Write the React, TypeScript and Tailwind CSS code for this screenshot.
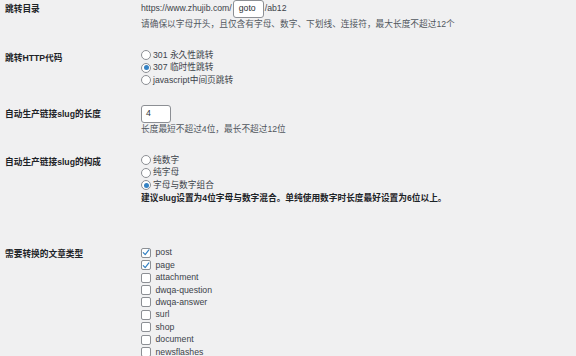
import React from 'react'

const FONT = '"Liberation Sans", "Noto Sans CJK SC", sans-serif'

const Radio = ({ checked, label }: { checked?: boolean; label: string }) => (
  <div className="flex items-center h-[12.5px]">
    <span className="w-[10px] h-[10px] rounded-full border border-[#8c8f94] bg-white flex items-center justify-center shrink-0">
      {checked && <span className="w-[5px] h-[5px] rounded-full bg-[#3582c4]" />}
    </span>
    <span className="ml-[2px] text-[#3c434a]">{label}</span>
  </div>
)

const Check = ({ checked, label }: { checked?: boolean; label: string }) => (
  <div className="flex items-center h-[12.45px]">
    <span className="w-[10px] h-[10px] rounded-[2px] border border-[#8c8f94] bg-white flex items-center justify-center shrink-0">
      {checked && (
        <svg viewBox="0 0 10 10" className="w-[9px] h-[9px]">
          <path d="M1.6 5.2 L4 7.6 L8.6 1.8" fill="none" stroke="#3582c4" strokeWidth="1.5" strokeLinecap="round" strokeLinejoin="round" />
        </svg>
      )}
    </span>
    <span className="ml-[4.5px] text-[#3c434a]">{label}</span>
  </div>
)

const Row = ({ label, labelClass, className, children }: { label: string; labelClass: string; className?: string; children: React.ReactNode }) => (
  <div className={`flex ${className ?? ''}`}>
    <div className={`w-[141px] shrink-0 pl-[5px] font-bold text-[#1d2327] ${labelClass}`}>{label}</div>
    <div className="flex flex-col">{children}</div>
  </div>
)

const postTypes = [
  { name: 'post', checked: true },
  { name: 'page', checked: true },
  { name: 'attachment' },
  { name: 'dwqa-question' },
  { name: 'dwqa-answer' },
  { name: 'surl' },
  { name: 'shop' },
  { name: 'document' },
  { name: 'newsflashes' },
]

export default function App() {
  return (
    <div className="w-[576px] h-[356px] overflow-hidden bg-[#f0f0f1] text-[8.7px] text-[#3c434a]" style={{ fontFamily: FONT }}>
      <Row label="跳转目录" labelClass="leading-[19px]">
        <div className="flex items-center h-[18px]">
          <span>https://www.zhujib.com/</span>
          <span className="w-[31px] h-[18px] ml-[1px] border border-[#8c8f94] rounded-[3px] bg-white px-[5px] flex items-center text-[#2c3338]">goto</span>
          <span className="ml-[1px]">/ab12</span>
        </div>
        <p className="leading-[12px] text-[#50575e]">请确保以字母开头，且仅含有字母、数字、下划线、连接符，最大长度不超过12个</p>
      </Row>

      <Row label="跳转HTTP代码" labelClass="mt-[3px] leading-[12.5px]" className="mt-[19px]">
        <Radio label="301 永久性跳转" />
        <Radio checked label="307 临时性跳转" />
        <Radio label="javascript中间页跳转" />
      </Row>

      <Row label="自动生产链接slug的长度" labelClass="leading-[18px]" className="mt-[18.5px]">
        <span className="w-[30px] h-[18px] border border-[#8c8f94] rounded-[3px] bg-white px-[4px] flex items-center text-[#2c3338]">4</span>
        <p className="leading-[12px] text-[#50575e]">长度最短不超过4位，最长不超过12位</p>
      </Row>

      <Row label="自动生产链接slug的构成" labelClass="mt-[2px] leading-[12.5px]" className="mt-[19px]">
        <Radio label="纯数字" />
        <Radio label="纯字母" />
        <Radio checked label="字母与数字组合" />
        <p className="leading-[12.5px] font-bold text-[#1d2327]">建议slug设置为4位字母与数字混合。单纯使用数字时长度最好设置为6位以上。</p>
      </Row>

      <Row label="需要转换的文章类型" labelClass="mt-[1.5px] leading-[12.5px]" className="mt-[42.5px]">
        {postTypes.map((t) => (
          <Check key={t.name} checked={t.checked} label={t.name} />
        ))}
      </Row>
    </div>
  )
}
